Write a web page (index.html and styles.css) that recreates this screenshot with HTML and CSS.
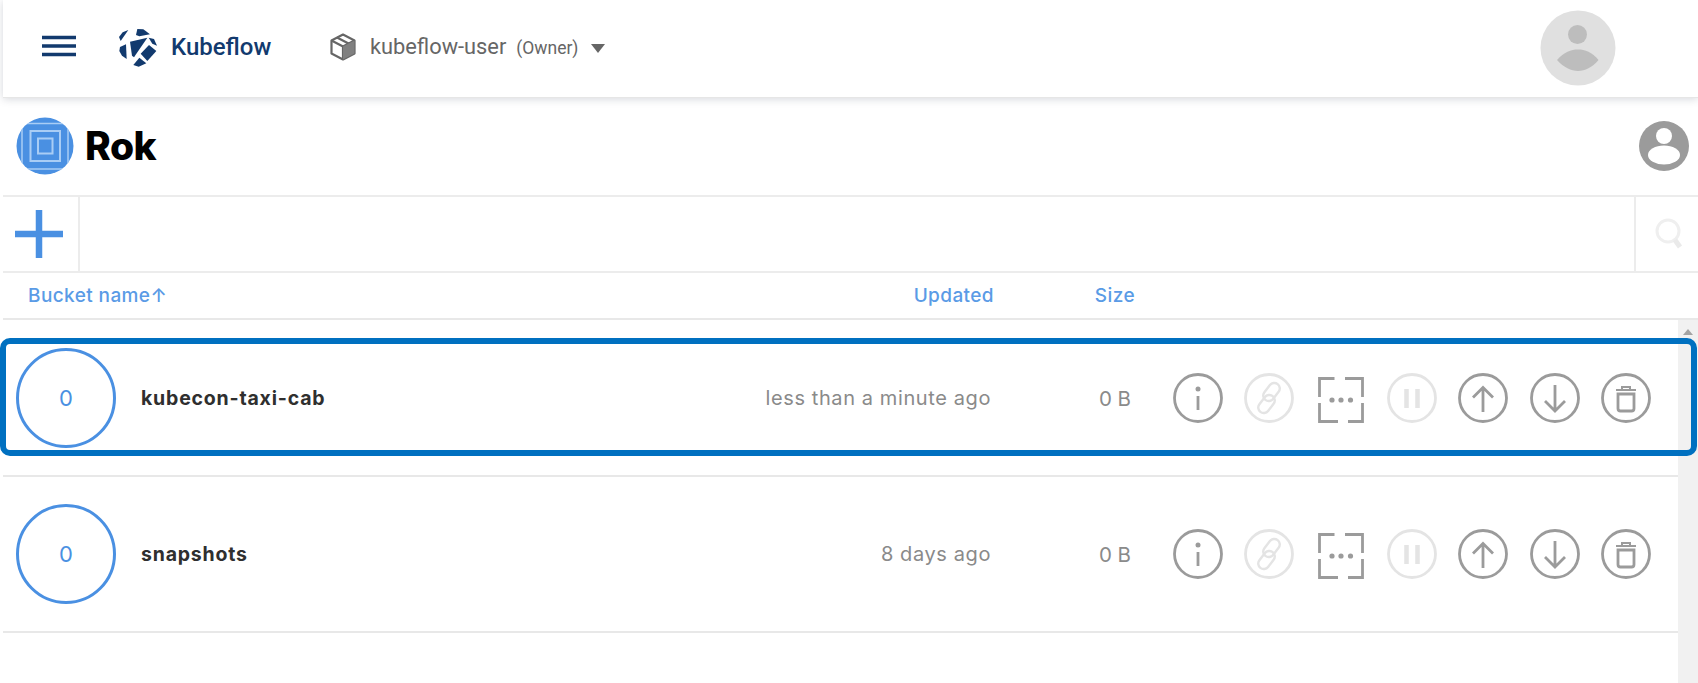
FILE: index.html
```html
<!DOCTYPE html>
<html lang="en">
<head>
<meta charset="utf-8">
<title>Rok</title>
<link rel="stylesheet" href="styles.css">
</head>
<body>
<div class="page">
  <header class="topbar">
    <svg class="burger" viewBox="0 0 34 22"><path d="M0 2.500h34M0 11h34M0 19.500h34"/></svg>
    <svg class="kf-logo" viewBox="0 0 180 180"><g>
      <polygon points="82,12 100,13 120,28 88,34 78,30"/>
      <polygon points="55,15 32,48 27,36 38,22"/>
      <polygon points="30,66 48,58 50,102 36,92 28,78"/>
      <polygon points="60,50 112,38 72,97 66,92"/>
      <polygon points="117,60 139,78 112,108 92,86"/>
      <polygon points="116,38 132,42 141,62 127,56"/>
      <polygon points="88,98 109,115 86,125 70,120"/>
    </g></svg>
    <span class="kf-name">Kubeflow</span>
    <svg class="pkg" viewBox="0 0 26 28">
      <path class="pkg-line" d="M13 1.500 24.500 7.500V20.500L13 26.500 1.500 20.500V7.500Z"/>
      <path class="pkg-line" d="M1.500 7.500 13 13.500 24.500 7.500M13 13.500V26.500M7 4.500 18.500 10.500"/>
      <path class="pkg-fill" d="M13 13.500 24.500 7.500V20.500L13 26.500Z"/>
    </svg>
    <span class="ns-name">kubeflow-user</span>
    <span class="ns-role">(Owner)</span>
    <span class="caret"></span>
    <svg class="avatar" viewBox="0 0 76 76">
      <circle cx="38" cy="38" r="37.500" fill="#e0e0e0"/>
      <circle cx="37.500" cy="24.500" r="9.500" fill="#bdbdbd"/>
      <path d="M17 50C24 42 31 39.500 38 39.500S52 42 58.500 50C52 57.500 45 61 38 61S24 57.500 17 50Z" fill="#bdbdbd"/>
    </svg>
  </header>

  <section class="rok-head">
    <svg class="rok-logo" viewBox="0 0 58 58">
      <defs><clipPath id="rok-clip"><circle cx="29" cy="29" r="28.500"/></clipPath></defs>
      <circle cx="29" cy="29" r="28.500" fill="#4a90e2"/>
      <g clip-path="url(#rok-clip)" fill="none" stroke="#a9cdf5" stroke-width="1.500">
        <rect x="6" y="6.500" width="46" height="45.500"/>
        <rect x="14.500" y="14" width="29.500" height="30" stroke-width="2"/>
        <rect x="22" y="21.500" width="14.500" height="15" stroke-width="2"/>
      </g>
    </svg>
    <h1 class="rok-title">Rok</h1>
    <svg class="rok-user" viewBox="0 0 50 50">
      <circle cx="25" cy="25" r="25" fill="#9b9b9b"/>
      <circle cx="25" cy="15" r="8" fill="#fff"/>
      <ellipse cx="25" cy="34" rx="16" ry="9.500" fill="#fff"/>
    </svg>
  </section>

  <section class="toolbar">
    <div class="add-cell">
      <svg class="plus" viewBox="0 0 48 48"><path d="M24 0V48M0 24H48"/></svg>
    </div>
    <div class="filter"></div>
    <div class="search-cell">
      <svg class="search" viewBox="0 0 34 34"><circle cx="15" cy="14" r="11"/><path class="search-handle" d="M22 23l5 7"/></svg>
    </div>
  </section>

  <div class="thead">
    <span class="th th-name">Bucket name↑</span>
    <span class="th th-updated">Updated</span>
    <span class="th th-size">Size</span>
  </div>

  <main class="body-area">
    <div class="rows">
      <article class="row">
        <div class="count">0</div>
        <div class="name">kubecon-taxi-cab</div>
        <div class="updated">less than a minute ago</div>
        <div class="size">0 B</div>
        <div class="actions">
          <svg class="act" viewBox="0 0 50 50"><circle cx="25" cy="25" r="23.500"/><circle class="dot" cx="25" cy="16" r="2.500"/><path d="M25 23V37"/></svg>
          <svg class="act off" viewBox="0 0 50 50"><circle cx="25" cy="25" r="23.500"/><rect class="link" x="22" y="9" width="11" height="20" rx="5.500" transform="rotate(38 27.500 19)"/><rect class="link" x="17" y="21" width="11" height="20" rx="5.500" transform="rotate(38 22.500 31)"/></svg>
          <svg class="act" viewBox="0 0 50 50"><path d="M18.500 5.500H3.500V24M29 5.500H46.500V24M3.500 30V48.500H22M46.500 30V48.500H32"/><circle class="dot" cx="16" cy="27" r="2.600"/><circle class="dot" cx="25" cy="27" r="2.600"/><circle class="dot" cx="34.500" cy="27" r="2.600"/></svg>
          <svg class="act off" viewBox="0 0 50 50"><circle cx="25" cy="25" r="23.500"/><path class="bars" d="M19.500 16V35M30.500 16V35"/></svg>
          <svg class="act" viewBox="0 0 50 50"><circle cx="25" cy="25" r="23.500"/><path d="M25 14V39M15 24.500 25 14.500 35 24.500"/></svg>
          <svg class="act" viewBox="0 0 50 50"><circle cx="25" cy="25" r="23.500"/><path d="M25 12V38M15 28 25 38 35 28"/></svg>
          <svg class="act" viewBox="0 0 50 50"><circle cx="25" cy="25" r="23.500"/><path class="thin" d="M15 17H35M21 17V14H29V17"/><path d="M17 21V35.500Q17 38 19.500 38H30.500Q33 38 33 35.500V21Z"/></svg>
        </div>
      </article>
      <article class="row">
        <div class="count">0</div>
        <div class="name">snapshots</div>
        <div class="updated">8 days ago</div>
        <div class="size">0 B</div>
        <div class="actions">
          <svg class="act" viewBox="0 0 50 50"><circle cx="25" cy="25" r="23.500"/><circle class="dot" cx="25" cy="16" r="2.500"/><path d="M25 23V37"/></svg>
          <svg class="act off" viewBox="0 0 50 50"><circle cx="25" cy="25" r="23.500"/><rect class="link" x="22" y="9" width="11" height="20" rx="5.500" transform="rotate(38 27.500 19)"/><rect class="link" x="17" y="21" width="11" height="20" rx="5.500" transform="rotate(38 22.500 31)"/></svg>
          <svg class="act" viewBox="0 0 50 50"><path d="M18.500 5.500H3.500V24M29 5.500H46.500V24M3.500 30V48.500H22M46.500 30V48.500H32"/><circle class="dot" cx="16" cy="27" r="2.600"/><circle class="dot" cx="25" cy="27" r="2.600"/><circle class="dot" cx="34.500" cy="27" r="2.600"/></svg>
          <svg class="act off" viewBox="0 0 50 50"><circle cx="25" cy="25" r="23.500"/><path class="bars" d="M19.500 16V35M30.500 16V35"/></svg>
          <svg class="act" viewBox="0 0 50 50"><circle cx="25" cy="25" r="23.500"/><path d="M25 14V39M15 24.500 25 14.500 35 24.500"/></svg>
          <svg class="act" viewBox="0 0 50 50"><circle cx="25" cy="25" r="23.500"/><path d="M25 12V38M15 28 25 38 35 28"/></svg>
          <svg class="act" viewBox="0 0 50 50"><circle cx="25" cy="25" r="23.500"/><path class="thin" d="M15 17H35M21 17V14H29V17"/><path d="M17 21V35.500Q17 38 19.500 38H30.500Q33 38 33 35.500V21Z"/></svg>
        </div>
      </article>
    </div>
    <div class="scrollbar"><span class="scroll-up"></span></div>
  </main>
  <div class="highlight"></div>
</div>
</body>
</html>
```

FILE: styles.css
```css
* { box-sizing: border-box; }
html, body { margin: 0; height: 100%; background: #fff; overflow: hidden; }
body { font-family: "Inter", "Liberation Sans", sans-serif; }
.page { position: relative; height: 683px; padding-left: 3px; display: flex; flex-direction: column; }

.topbar { height: 98px; flex: none; display: flex; align-items: center; box-shadow: 0 1px 8px rgba(60,70,90,.22); border-bottom: 1px solid #e6e6e6; position: relative; }
.burger { width: 34px; height: 22px; margin-left: 39px; flex: none; margin-top: -5px; }
.burger path { fill: none; stroke: #123a6e; stroke-width: 3.600; }
.kf-logo { width: 60px; height: 60px; margin-left: 34px; margin-top: 13px; flex: none; }
.kf-logo polygon { fill: #123a6e; }
.kf-name { font-family: "Roboto", sans-serif; font-weight: 500; font-size: 24px; color: #123a6e; margin-left: 1px; width: 100px; margin-top: -3px; }
.pkg { width: 26px; height: 28px; margin-left: 59px; flex: none; margin-top: -4px; }
.pkg-line { fill: none; stroke: #666; stroke-width: 2.200; stroke-linejoin: round; }
.pkg-fill { fill: #808080; }
.ns-name { font-family: "Roboto", sans-serif; font-size: 21.800px; color: #666; margin-left: 14px; margin-top: -5px; }
.ns-role { font-family: "Roboto", sans-serif; font-size: 17.500px; color: #666; margin-left: 10px; margin-top: -1px; }
.caret { width: 0; height: 0; border-left: 7.500px solid transparent; border-right: 7.500px solid transparent; border-top: 9px solid #666; margin-left: 13px; margin-top: -1px; }
.avatar { width: 76px; height: 76px; margin-left: auto; margin-right: 82px; flex: none; margin-top: -1px; }

.rok-head { height: 97px; flex: none; display: flex; align-items: center; }
.rok-logo { width: 58px; height: 58px; margin-left: 13px; flex: none; margin-top: -2px; }
.rok-title { margin: -2px 0 0 11px; font-family: "Inter", sans-serif; font-weight: 800; font-size: 39px; color: #000; line-height: 1; letter-spacing: -.5px; }
.rok-user { width: 50px; height: 50px; margin-left: auto; margin-right: 9px; flex: none; margin-top: -1px; }

.toolbar { height: 78px; flex: none; display: flex; border-top: 2px solid #ececec; border-bottom: 2px solid #ececec; }
.add-cell { width: 77px; border-right: 2px solid #ececec; display: flex; align-items: center; padding-left: 12px; }
.plus { width: 48px; height: 48px; }
.plus path { fill: none; stroke: #4a90e2; stroke-width: 6.500; }
.filter { flex: 1; }
.search-cell { width: 64px; border-left: 2px solid #ececec; display: flex; align-items: center; padding-left: 17px; }
.search { width: 34px; height: 34px; }
.search circle { fill: none; stroke: #efefef; stroke-width: 3; }
.search-handle { fill: none; stroke: #eaeaea; stroke-width: 5; }

.thead { height: 47px; flex: none; display: grid; grid-template-columns: 25px 1fr 130px 141px 563px; align-items: center; border-bottom: 2px solid #e8e8e8; }
.th { font-size: 19px; font-weight: 500; letter-spacing: .4px; color: #5a9be6; line-height: 1; }
.th-name { grid-column: 2; }
.th-updated { grid-column: 3; text-align: right; }
.th-size { grid-column: 4; text-align: right; }

.body-area { flex: 1; display: flex; min-height: 0; }
.rows { flex: 1; padding-top: 1px; }
.row { height: 156px; display: grid; grid-template-columns: 138px 400px 1fr 140px 520px; align-items: center; border-bottom: 2px solid #e8e8e8; padding-right: 27px; }
.count { width: 100px; height: 100px; margin-left: 13px; border: 3px solid #4a90e2; border-radius: 50%; display: flex; align-items: center; justify-content: center; font-size: 22px; color: #4a90e2; }
.name { font-weight: 700; font-size: 19.500px; letter-spacing: .8px; color: #2f2f2f; }
.updated { text-align: right; font-size: 20px; letter-spacing: .6px; color: #8a8a8a; }
.size { text-align: right; font-size: 20.500px; color: #8a8a8a; }
.actions { display: flex; gap: 21.330px; padding-left: 42px; }
.act { width: 50px; height: 50px; flex: none; }
.act circle, .act path, .act rect { fill: none; stroke: #9b9b9b; stroke-width: 2.800; }
.act .dot { fill: #9b9b9b; stroke: none; }
.act .thin { stroke-width: 2; }
.act .bars { stroke-width: 4.500; }
.act .link { stroke-width: 2.400; }
.act.off circle, .act.off path, .act.off rect { stroke: #e4e4e4; }

.scrollbar { width: 20px; flex: none; background: #f1f1f1; position: relative; }
.scroll-up { position: absolute; top: 9px; left: 5px; width: 0; height: 0; border-left: 5px solid transparent; border-right: 5px solid transparent; border-bottom: 6px solid #a3a3a3; }

.highlight { position: absolute; left: 0; top: 338px; width: 1697px; height: 118px; border: 6px solid #0070c0; border-radius: 10px; pointer-events: none; }
```
